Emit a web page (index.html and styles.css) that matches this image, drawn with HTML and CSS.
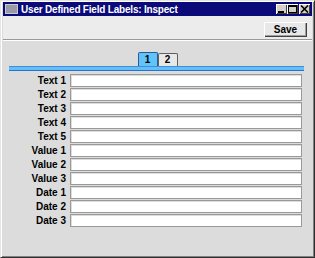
FILE: index.html
```html
<!DOCTYPE html>
<html lang="en">
<head>
  <meta charset="UTF-8" />
  <title>User Defined Field Labels: Inspect</title>
  <link rel="stylesheet" href="styles.css">
</head>
<body>
  <div class="window">
    <div class="titlebar">
      <span class="app-icon"></span>
      <span class="title">User Defined Field Labels: Inspect</span>
      <div class="winbtns">
        <span class="winbtn"><svg width="9" height="8" viewBox="0 0 9 8"><rect x="1" y="6" width="6" height="2" fill="#000"/></svg></span>
        <span class="winbtn"><svg width="9" height="8" viewBox="0 0 9 8"><rect x="0.5" y="0.5" width="8" height="7" fill="none" stroke="#000"/><rect x="0" y="0" width="9" height="2" fill="#000"/></svg></span>
        <span class="winbtn"><svg width="9" height="8" viewBox="0 0 9 8"><path d="M1 0.5 L8 7.5 M8 0.5 L1 7.5" stroke="#000" stroke-width="1.6"/></svg></span>
      </div>
    </div>

    <div class="toolbar">
      <button class="save">Save</button>
    </div>

    <div class="content">
      <div class="tabs">
        <div class="tab active">1</div>
        <div class="tab">2</div>
      </div>
      <div class="tabbar"></div>

      <div class="form">
        <label>Text 1</label><input type="text">
        <label>Text 2</label><input type="text">
        <label>Text 3</label><input type="text">
        <label>Text 4</label><input type="text">
        <label>Text 5</label><input type="text">
        <label>Value 1</label><input type="text">
        <label>Value 2</label><input type="text">
        <label>Value 3</label><input type="text">
        <label>Date 1</label><input type="text">
        <label>Date 2</label><input type="text">
        <label>Date 3</label><input type="text">
      </div>
    </div>
  </div>
</body>
</html>
```

FILE: styles.css
```css
body {
  margin: 0;
  font-family: "Liberation Sans", Arial, sans-serif;
  font-weight: bold;
  font-size: 10px;
}
.window {
  width: 315px;
  height: 258px;
  box-sizing: border-box;
  background: #dcdcdc;
  border-top: 1px solid #e4e4e4;
  border-left: 1px solid #e4e4e4;
  border-right: 1px solid #303030;
  border-bottom: 1px solid #303030;
  box-shadow: inset 1px 1px 0 #fff, inset -1px -1px 0 #808080;
  padding: 1px 2px 2px 2px;
  display: flex;
  flex-direction: column;
}
.titlebar {
  height: 14px;
  background: #0a0a78;
  color: #fff;
  display: flex;
  align-items: center;
  padding: 0 2px 0 2px;
}
.app-icon {
  width: 11px;
  height: 8px;
  background: #9a9aa6;
  border: 1px solid #c8c8d0;
  margin-right: 3px;
}
.title {
  font-size: 10px;
  letter-spacing: -0.2px;
  flex: 1;
}
.winbtns {
  display: flex;
}
.winbtn {
  width: 11px;
  height: 10px;
  background: #d4d0c8;
  box-shadow: inset 1px 1px 0 #fff, inset -1px -1px 0 #404040;
  display: flex;
  align-items: center;
  justify-content: center;
}
.winbtn:last-child {
  margin-left: 1px;
}
.toolbar {
  height: 21px;
  background: #ececec;
  border-bottom: 1px solid #9a9a9a;
  display: flex;
  justify-content: flex-end;
  align-items: flex-end;
  padding: 0 5px 2px 5px;
}
.save {
  width: 43px;
  height: 15px;
  padding: 0;
  background: #e8e8e8;
  border: none;
  box-shadow: inset 1px 1px 0 #fff, inset -1px -1px 0 #404040, inset -2px -2px 0 #a0a0a0;
  font-family: "Liberation Sans", Arial, sans-serif;
  font-weight: bold;
  font-size: 10px;
  color: #000;
}
.content {
  flex: 1;
  border-top: 1px solid #fff;
  padding: 0 8px 0 6px;
}
.tabs {
  display: flex;
  justify-content: center;
  margin-top: 11px;
  padding-left: 2px;
  align-items: flex-end;
}
.tab {
  width: 18px;
  height: 12px;
  line-height: 12px;
  text-align: center;
  background: #e8e8e8;
  border: 1px solid #606060;
  border-bottom: none;
  border-radius: 2px 2px 0 0;
  font-size: 10px;
}
.tab.active {
  background: #60c4f8;
  height: 13px;
  line-height: 13px;
  border-color: #2a5a9a;
}
.tabbar {
  height: 3px;
  background: #60c0f8;
  border-top: 1px solid #4a8ad8;
  border-bottom: 1px solid #2a70d0;
}
.form {
  display: grid;
  grid-template-columns: 57px 1fr;
  column-gap: 4px;
  row-gap: 1px;
  margin-top: 3px;
  padding-right: 2px;
}
.form label {
  text-align: right;
  line-height: 13px;
  font-size: 10px;
}
.form input {
  height: 13px;
  box-sizing: border-box;
  margin: 0;
  padding: 0;
  background: #fff;
  border: 1px solid #999;
  box-shadow: inset 1px 1px 0 #ddd;
}
```
